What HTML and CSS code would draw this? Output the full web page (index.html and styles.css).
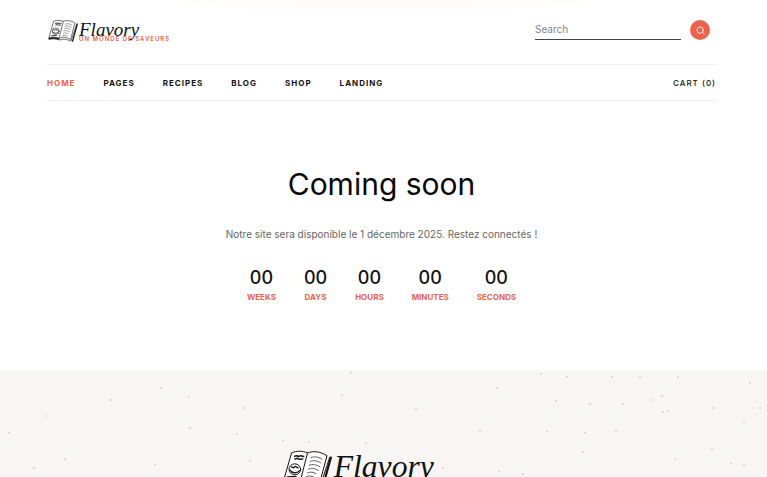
FILE: index.html
```html
<!DOCTYPE html>
<html lang="fr">
<head>
<meta charset="utf-8">
<meta name="viewport" content="width=device-width, initial-scale=1">
<title>Flavory – Coming soon</title>
<link rel="stylesheet" href="styles.css">
</head>
<body>
<header class="header">
  <div class="masthead">
    <a class="logo" href="#" aria-label="Flavory">
      <svg viewBox="0 0 120 27">
        <g id="logo-art">
          <g fill="none" stroke="#151515" stroke-width=".6" stroke-linejoin="round" stroke-linecap="round">
            <path fill="#fff" d="M6 2.2C9 1 12 1 15.3 2.4 19 .9 23 1.6 27 4L22.6 20.4C18.6 18 14.8 17.8 11 19.2 7.6 17.8 4.4 18 1.2 18.8Z"/>
            <path d="M15.3 2.4 11 19.2M1.2 18.8 .8 20.4C5 19.6 8 19.8 11.4 21 15 19.6 19 20 23 22.2L28.6 5"/>
            <path stroke-width="1.3" d="M29.3 5.2 24.6 22.2M1.4 19.6C5 18.6 8 18.8 11 20.1"/>
            <path stroke-width=".9" d="M7.6 4.3 9 4l1 .5 1.2-.5 1.8.5M7.8 6 9.4 5.6l1 .6 2-.2"/>
            <path stroke-width=".4" d="M17.4 5.2c2-.9 4-.6 6.6.8M16.9 7.5c2-.9 4-.6 6.4.8M16.3 9.8c2-.9 4-.6 6.4.8M15.7 12.1c2-.9 4-.6 6.2.8M15.1 14.4c2-.9 4-.6 5.2.4M14.5 16.7c2-.9 3.6-.6 4.8.2"/>
            <ellipse cx="7.7" cy="12.2" rx="3.5" ry="3.3"/>
            <path stroke-width=".8" d="M4.7 12.7c1.2 1.8 4.2 2.2 5.8.3M5.7 10.7l1.2.6 1-.9 1.8.9M3.2 16.8l5.2-.3"/>
          </g>
          <text class="logo-name" x="31" y="17">Flavory</text>
          <text class="logo-tag" x="31" y="22">UN MONDE DE SAVEURS</text>
        </g>
      </svg>
    </a>
    <form class="search">
      <input class="search-field" type="search" placeholder="Search" aria-label="Search">
      <button class="search-button" type="button" aria-label="Search">
        <svg viewBox="0 0 10 10" fill="none" stroke="#fff" stroke-width=".9" stroke-linecap="round"><circle cx="4.6" cy="4.6" r="3.5"/><path d="M7.2 7.2 9 9"/></svg>
      </button>
    </form>
  </div>
  <nav class="nav">
    <ul class="menu">
      <li><a class="active" href="#">HOME</a></li>
      <li><a href="#">PAGES</a></li>
      <li><a href="#">RECIPES</a></li>
      <li><a href="#">BLOG</a></li>
      <li><a href="#">SHOP</a></li>
      <li><a href="#">LANDING</a></li>
    </ul>
    <a class="cart" href="#">CART (0)</a>
  </nav>
</header>
<main class="hero">
  <h1>Coming soon</h1>
  <p class="intro">Notre site sera disponible le 1 décembre 2025. Restez connectés !</p>
  <dl class="countdown">
    <div><dd>00</dd><dt>WEEKS</dt></div>
    <div><dd>00</dd><dt>DAYS</dt></div>
    <div><dd>00</dd><dt>HOURS</dt></div>
    <div><dd>00</dd><dt>MINUTES</dt></div>
    <div><dd>00</dd><dt>SECONDS</dt></div>
  </dl>
</main>
<footer class="footer">
  <svg class="specks" viewBox="0 0 767 107" preserveAspectRatio="xMidYMin slice" aria-hidden="true">
    <path d="M9 63h0M46 46h0M111 30h0M161 18h0M189 27h0M190 58h0M244 38h0M237 64h0M65 89h0M155 95h0M34 98h0M250 91h0M283 71h0M309 72h0M366 73h0M342 25h0M351 3h0M416 39h0M497 18h0M541 4h0M567 7h0M612 7h0M640 7h0M678 7h0M750 13h0M556 31h0M590 34h0M623 34h0M651 30h0M662 26h0M663 42h0M668 41h0M713 38h0M760 38h0M744 52h0M480 61h0M547 61h0M585 63h0M616 61h0M583 82h0M712 79h0M675 89h0M731 93h0M744 95h0M443 98h0M499 101h0M523 104h0"/>
  </svg>
  <a class="footer-logo" href="#" aria-label="Flavory">
    <svg viewBox="0 0 120 27"><use href="#logo-art"/></svg>
  </a>
</footer>
</body>
</html>
```
FILE: styles.css
```css
* {
  box-sizing: border-box;
}

body {
  display: flex;
  flex-direction: column;
  height: 100vh;
  margin: 0;
  overflow: hidden;
  background: #fff radial-gradient(ellipse 240px 14px at 50% 0, #fff8f6, #fffdfb 60%, #fff) no-repeat;
  color: #111;
  font-family: Inter, "Liberation Sans", sans-serif;
}

a {
  color: inherit;
  text-decoration: none;
}

.header,
.hero,
.footer {
  flex: none;
  padding: 0 51px 0 47px;
}

.masthead {
  display: flex;
  align-items: center;
  justify-content: space-between;
  height: 64px;
  padding: 0 6px 4px 1px;
}

.logo svg {
  display: block;
  width: 120px;
  margin-top: 4px;
  overflow: visible;
}

.logo-name {
  fill: #111;
  font: italic 19px "Liberation Serif", serif;
}

.logo-tag {
  fill: #e8644f;
  font: 600 6px Inter, sans-serif;
  letter-spacing: 1px;
}

.search {
  display: flex;
  align-items: center;
  gap: 9px;
}

.search-field {
  width: 146px;
  height: 20px;
  margin: 0;
  padding: 0 0 2px;
  border: 0;
  border-bottom: 1px solid #444;
  border-radius: 0;
  outline: 0;
  background: transparent;
  color: #444;
  font: 10px Inter, sans-serif;
}

.search-field::placeholder {
  color: #858585;
}

.search-button {
  display: grid;
  place-items: center;
  width: 20px;
  height: 20px;
  padding: 0;
  border: 0;
  border-radius: 50%;
  background: #e8644f;
}

.search-button svg {
  width: 9px;
}

.nav {
  display: flex;
  align-items: center;
  justify-content: space-between;
  height: 37px;
  border-top: 1px solid #f0f0f0;
  border-bottom: 1px solid #f0f0f0;
  font-size: 8px;
  font-weight: 700;
  letter-spacing: 1px;
}

.menu {
  display: flex;
  gap: 28px;
  margin: 0;
  padding: 0;
  list-style: none;
}

.active {
  color: #e8644f;
}

.cart {
  font-weight: 500;
}

.hero {
  height: 269px;
  padding-top: 63px;
  text-align: center;
}

h1 {
  margin: 0;
  color: #080808;
  font-size: 30px;
  font-weight: 400;
  line-height: 40px;
}

.intro {
  margin: 22px 0 0;
  color: #666;
  font-size: 10px;
  line-height: 16px;
}

.countdown {
  display: flex;
  justify-content: center;
  gap: 28px;
  margin: 24px 0 0;
}

.countdown div {
  display: flex;
  flex-direction: column;
}

.countdown dd {
  margin: 0;
  font-size: 18px;
  font-weight: 500;
  line-height: 24px;
}

.countdown dt {
  color: #e8644f;
  font-size: 8px;
  font-weight: 700;
  line-height: 14px;
}

.footer {
  position: relative;
  flex: 1;
  overflow: hidden;
  background: #f8f6f4;
}

.specks {
  position: absolute;
  inset: 0;
  width: 100%;
  fill: none;
  stroke: #d8a8a8;
  stroke-width: 1.5;
  stroke-linecap: round;
}

.footer-logo {
  position: relative;
  display: block;
  width: 200px;
  margin: 79px auto 0;
}

.footer-logo svg {
  display: block;
  width: 100%;
}
```
